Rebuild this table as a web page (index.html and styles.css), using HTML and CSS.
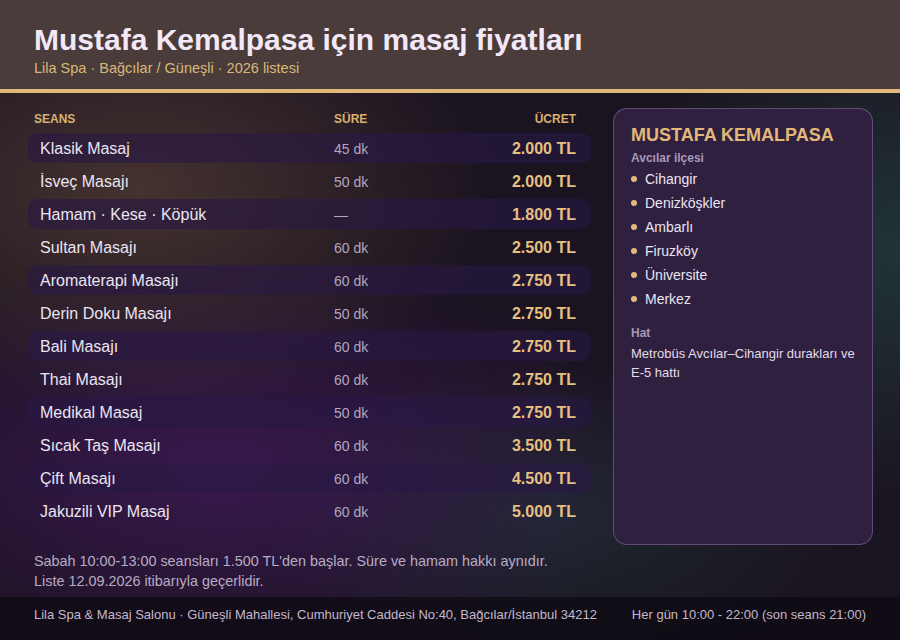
FILE: index.html
```html
<!DOCTYPE html>
<html lang="tr">
<head>
<meta charset="utf-8">
<title>Mustafa Kemalpasa için masaj fiyatları</title>
<link rel="stylesheet" href="styles.css">
</head>
<body>
<div class="page">
  <header class="top">
    <h1 class="title">Mustafa Kemalpasa için masaj fiyatları</h1>
    <div class="subtitle">Lila Spa · Bağcılar / Güneşli · 2026 listesi</div>
  </header>
  <main class="content">
    <section class="prices">
      <div class="thead">
        <span>SEANS</span><span>SÜRE</span><span class="r">ÜCRET</span>
      </div>
      <div class="row alt"><span class="name">Klasik Masaj</span><span class="dur">45 dk</span><span class="price">2.000 TL</span></div>
      <div class="row"><span class="name">İsveç Masajı</span><span class="dur">50 dk</span><span class="price">2.000 TL</span></div>
      <div class="row alt"><span class="name">Hamam · Kese · Köpük</span><span class="dur">—</span><span class="price">1.800 TL</span></div>
      <div class="row"><span class="name">Sultan Masajı</span><span class="dur">60 dk</span><span class="price">2.500 TL</span></div>
      <div class="row alt"><span class="name">Aromaterapi Masajı</span><span class="dur">60 dk</span><span class="price">2.750 TL</span></div>
      <div class="row"><span class="name">Derin Doku Masajı</span><span class="dur">50 dk</span><span class="price">2.750 TL</span></div>
      <div class="row alt"><span class="name">Bali Masajı</span><span class="dur">60 dk</span><span class="price">2.750 TL</span></div>
      <div class="row"><span class="name">Thai Masajı</span><span class="dur">60 dk</span><span class="price">2.750 TL</span></div>
      <div class="row alt"><span class="name">Medikal Masaj</span><span class="dur">50 dk</span><span class="price">2.750 TL</span></div>
      <div class="row"><span class="name">Sıcak Taş Masajı</span><span class="dur">60 dk</span><span class="price">3.500 TL</span></div>
      <div class="row alt"><span class="name">Çift Masajı</span><span class="dur">60 dk</span><span class="price">4.500 TL</span></div>
      <div class="row"><span class="name">Jakuzili VIP Masaj</span><span class="dur">60 dk</span><span class="price">5.000 TL</span></div>
    </section>
    <aside class="side">
      <h2 class="side-title">MUSTAFA KEMALPASA</h2>
      <div class="side-label">Avcılar ilçesi</div>
      <ul class="areas">
        <li>Cihangir</li>
        <li>Denizköşkler</li>
        <li>Ambarlı</li>
        <li>Firuzköy</li>
        <li>Üniversite</li>
        <li>Merkez</li>
      </ul>
      <div class="side-label hat">Hat</div>
      <p class="line">Metrobüs Avcılar–Cihangir durakları ve E-5 hattı</p>
    </aside>
  </main>
  <div class="notes">
    <p>Sabah 10:00-13:00 seansları 1.500 TL'den başlar. Süre ve hamam hakkı aynıdır.</p>
    <p>Liste 12.09.2026 itibarıyla geçerlidir.</p>
  </div>
  <footer class="foot">
    <span>Lila Spa &amp; Masaj Salonu · Güneşli Mahallesi, Cumhuriyet Caddesi No:40, Bağcılar/İstanbul 34212</span>
    <span>Her gün 10:00 - 22:00 (son seans 21:00)</span>
  </footer>
</div>
</body>
</html>
```

FILE: styles.css
```css
* { box-sizing: border-box; }
html, body {
  margin: 0;
  padding: 0;
  width: 900px;
  height: 640px;
  overflow: hidden;
}
body {
  font-family: "Liberation Sans", Arial, sans-serif;
  background-color: #1a1320;
  background-image:
    radial-gradient(ellipse 360px 220px at 140px 190px, rgba(104, 76, 60, 0.55), rgba(104, 76, 60, 0) 100%),
    radial-gradient(ellipse 440px 210px at 220px 470px, rgba(78, 28, 110, 0.6), rgba(78, 28, 110, 0) 100%),
    radial-gradient(ellipse 300px 260px at 900px 250px, rgba(40, 92, 82, 0.45), rgba(40, 92, 82, 0) 100%),
    radial-gradient(ellipse 300px 160px at 560px 520px, rgba(34, 70, 66, 0.4), rgba(34, 70, 66, 0) 100%);
  color: #ece4f2;
}
.page {
  display: flex;
  flex-direction: column;
  height: 640px;
}
.top {
  background: #4a3c3a;
  border-bottom: 4px solid #e0b878;
  padding: 22px 34px 10px;
  height: 93px;
}
.title {
  margin: 0;
  font-size: 30px;
  line-height: 36px;
  font-weight: 700;
  color: #f3e8f7;
}
.subtitle {
  margin-top: 1px;
  font-size: 14.5px;
  line-height: 18px;
  color: #d8b878;
}
.content {
  display: flex;
  gap: 22px;
  padding: 15px 27px 0 28px;
  height: 452px;
}
.prices {
  width: 563px;
  display: flex;
  flex-direction: column;
  gap: 3px;
}
.thead, .row {
  display: grid;
  align-items: center;
}
.thead {
  grid-template-columns: 300px 1fr auto;
  padding: 0 15px 0 6px;
  height: 21px;
  margin-bottom: 1px;
  font-size: 12px;
  font-weight: 700;
  color: #d9b070;
}
.thead .r { text-align: right; }
.row {
  grid-template-columns: 294px 1fr auto;
  height: 30px;
  padding: 2px 15px 0 12px;
  border-radius: 9px;
}
.row.alt { background: rgba(40, 24, 68, 0.62); }
.name {
  font-size: 16px;
  color: #ece4f2;
}
.dur {
  font-size: 14px;
  color: #b2a6be;
}
.price {
  font-size: 16px;
  font-weight: 700;
  color: #e6c080;
  text-align: right;
}
.side {
  width: 260px;
  height: 437px;
  background: #2f2040;
  border: 1px solid rgba(160, 130, 190, 0.45);
  border-radius: 14px;
  padding: 15px 17px;
}
.side-title {
  margin: 0;
  font-size: 18px;
  line-height: 22px;
  font-weight: 700;
  color: #e2b878;
}
.side-label {
  margin-top: 4px;
  font-size: 12px;
  line-height: 16px;
  font-weight: 700;
  color: #a898b6;
}
.areas {
  list-style: none;
  margin: 1px 0 0;
  padding: 0;
}
.areas li {
  display: flex;
  align-items: center;
  gap: 8px;
  font-size: 14px;
  line-height: 24px;
  color: #ece4f2;
}
.areas li::before {
  content: "";
  width: 6px;
  height: 6px;
  border-radius: 50%;
  background: #e2b878;
}
.side-label.hat { margin-top: 14px; }
.line {
  margin: 3px 0 0;
  font-size: 13px;
  line-height: 19px;
  color: #e4dcea;
}
.notes {
  padding: 6px 34px 0;
  height: 52px;
}
.notes p {
  margin: 0;
  font-size: 14.4px;
  line-height: 20px;
  color: #b8acc4;
}
.foot {
  flex: 1;
  background: rgba(14, 9, 18, 0.75);
  display: flex;
  justify-content: space-between;
  align-items: flex-start;
  padding: 10px 34px 0;
  font-size: 13px;
  line-height: 16px;
  color: #c4b8cc;
}
```
